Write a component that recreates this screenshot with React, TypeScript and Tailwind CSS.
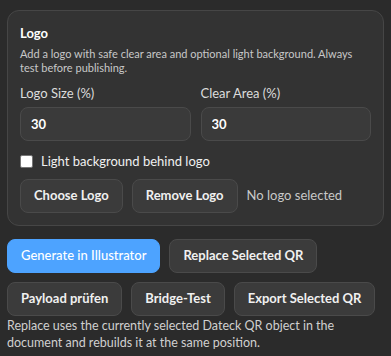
import { useState } from "react";

const font = { fontFamily: 'Lato, "Liberation Sans", sans-serif' };

function Btn({ children, primary }: { children: React.ReactNode; primary?: boolean }) {
  return (
    <button
      className={
        primary
          ? "h-[34px] px-[13px] whitespace-nowrap rounded-lg bg-[#4da3ff] border border-[#4da3ff] text-white text-[13px] font-medium"
          : "h-[34px] px-[13px] whitespace-nowrap rounded-lg bg-[#3b3b3b] border border-[#4a4a4a] text-[#f0f0f0] text-[13px] font-bold"
      }
    >
      {children}
    </button>
  );
}

export default function App() {
  const [light, setLight] = useState(false);

  return (
    <div style={font} className="bg-[#2b2b2b] min-h-[356px] px-[7px] pt-[10px] text-white">
      {/* ── Logo card ── */}
      <section className="border border-[#464646] bg-[#333333] rounded-xl px-[12px] pt-[12px] pb-[12px]">
        <h2 className="text-[13px] leading-[20px] font-bold text-white">Logo</h2>
        <p className="mt-1 text-[11px] leading-[14px] text-[#c8c8c8]">
          Add a logo with safe clear area and optional light background. Always test before publishing.
        </p>

        <div className="grid grid-cols-2 gap-x-[10px] mt-[9px]">
          <label className="flex flex-col gap-[5px]">
            <span className="text-[13px] leading-[18px] text-[#dcdcdc]">Logo Size (%)</span>
            <input
              defaultValue="30"
              className="h-[34px] rounded-lg bg-[#3a3a3a] border border-[#4a4a4a] px-[10px] text-[13px] font-bold text-white outline-none"
            />
          </label>
          <label className="flex flex-col gap-[5px]">
            <span className="text-[13px] leading-[18px] text-[#dcdcdc]">Clear Area (%)</span>
            <input
              defaultValue="30"
              className="h-[34px] rounded-lg bg-[#3a3a3a] border border-[#4a4a4a] px-[10px] text-[13px] font-bold text-white outline-none"
            />
          </label>
        </div>

        <label className="flex items-center gap-[8px] mt-[11px] text-[13px] leading-[18px] text-[#f0f0f0]">
          <input
            type="checkbox"
            checked={light}
            onChange={(e) => setLight(e.target.checked)}
            className="w-[13px] h-[13px] m-0 appearance-none bg-white border border-[#767676] rounded-[2px]"
          />
          Light background behind logo
        </label>

        <div className="flex items-center gap-[9px] mt-[9px]">
          <Btn>Choose Logo</Btn>
          <Btn>Remove Logo</Btn>
          <span className="text-[13px] text-[#c8c8c8]">No logo selected</span>
        </div>
      </section>

      {/* ── Actions ── */}
      <div className="flex gap-[9px] mt-[13px]">
        <Btn primary>Generate in Illustrator</Btn>
        <Btn>Replace Selected QR</Btn>
      </div>
      <div className="flex gap-[9px] mt-[9px]">
        <Btn>Payload prüfen</Btn>
        <Btn>Bridge-Test</Btn>
        <Btn>Export Selected QR</Btn>
      </div>
      <p className="mt-[1px] text-[12.5px] leading-[17px] text-[#d0d0d0]">
        Replace uses the currently selected Dateck QR object in the document and rebuilds it at the same position.
      </p>
    </div>
  );
}
